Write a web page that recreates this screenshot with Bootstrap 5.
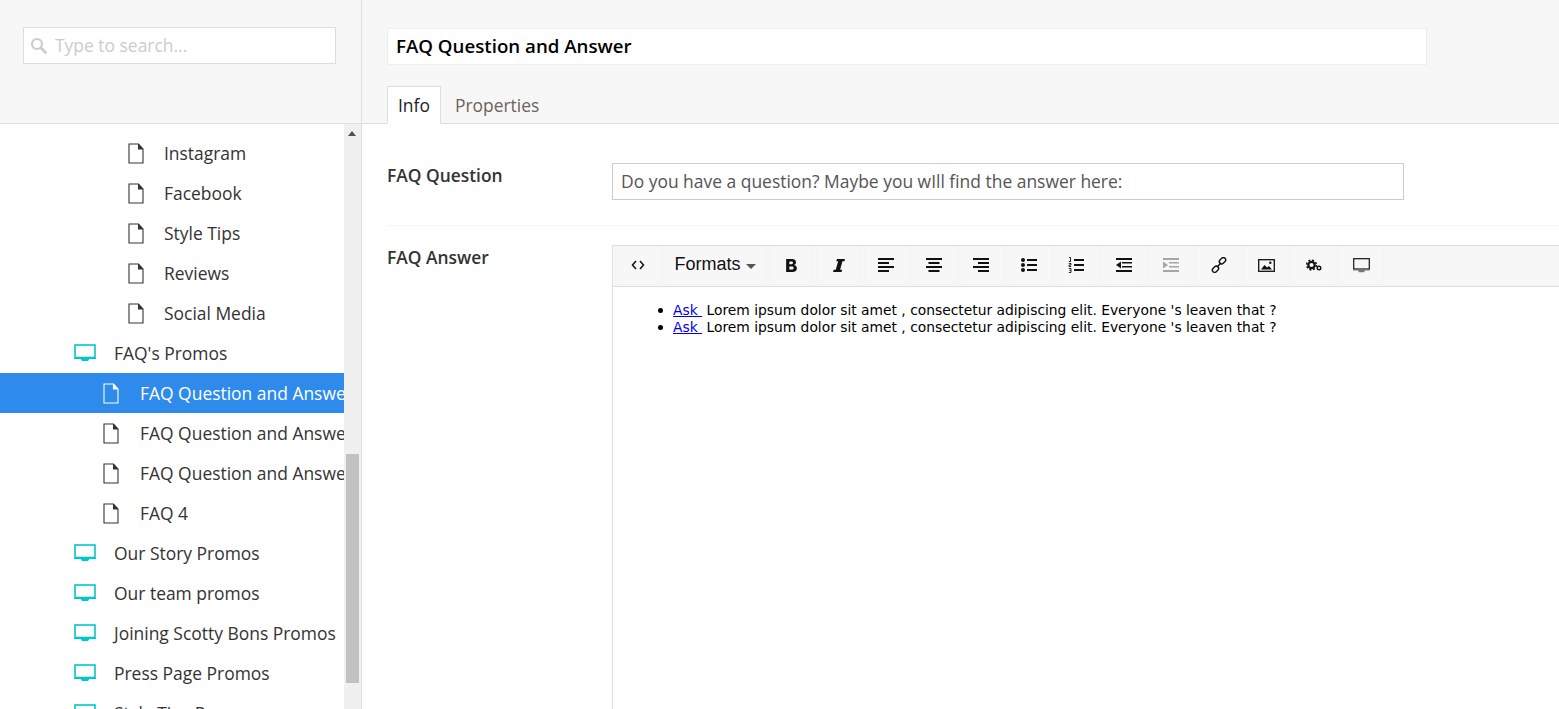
<!DOCTYPE html>
<html lang="en">
<head>
  <meta charset="UTF-8" />
  <meta name="viewport" content="width=device-width, initial-scale=1.0"/>
  <title>FAQ Question and Answer</title>
  <link href="https://cdn.jsdelivr.net/npm/bootstrap@5.3.3/dist/css/bootstrap.min.css" rel="stylesheet">
  <style>
    body {
      font-family: "Open Sans", sans-serif;
      font-size: 17.45px;
      color: #333;
      height: 709px;
      overflow: hidden;
    }
    .side-pane { width: 362px; border-right: 1px solid #ddd; height: 709px; }
    .head-area { height: 124px; background: #f7f7f7; border-bottom: 1px solid #ddd; }
    .side-head { padding: 27px 25px 0 23px; }
    .search-box { height: 37px; border: 1px solid #ddd; background: #fff; padding-left: 6px; gap: 8px; color: #ccc; }
    .search-box input { border: 0; outline: 0; padding: 0; width: 260px; font-size: 17.45px; color: #555; background: transparent; }
    .search-box input::placeholder { color: #ccc; opacity: 1; }

    .tree-wrap { height: 585px; overflow: hidden; }
    .tree-list { width: 344px; padding-top: 9px; overflow: hidden; white-space: nowrap; }
    .tree-row { height: 40px; color: #333; }
    .tree-row svg { flex: none; }
    .lvl-1 { padding-left: 74px; gap: 18px; }
    .lvl-2 { padding-left: 103px; gap: 21px; }
    .lvl-3 { padding-left: 128px; gap: 20px; }
    .tree-row.is-active { background: #2e8bec; color: #fff; }
    .scroll-track { width: 17px; background: #f0f0f0; position: relative; flex: none; }
    .scroll-up { position: absolute; left: 4px; top: 7px; border: 4px solid transparent; border-top: 0; border-bottom: 5px solid #505050; }
    .scroll-thumb { position: absolute; left: 2px; top: 330px; width: 13px; height: 229px; background: #c1c1c1; }

    .main-head { padding: 28px 0 0 25px; }
    .title-input.form-control {
      width: 1040px; height: 37px; border: 1px solid #eee; border-radius: 0; padding: 0 8px 2px;
      font-size: 18.7px; font-weight: 600; color: #000;
    }
    .page-tabs { margin-top: 21px; border-bottom: 0; gap: 0; }
    .page-tabs .nav-link {
      height: 38px; padding: 0 10px; line-height: 37px; font-size: 17.45px; color: #6b635c;
      border-radius: 0; margin: 0 3px 0 0; border: 1px solid transparent;
    }
    .page-tabs .nav-link.active { color: #222; background: #fff; border-color: #ddd #ddd #fff; }

    .form-part { padding: 39px 0 0 25px; }
    .field-label { width: 225px; flex: none; font-size: 17.4px; font-weight: 600; color: #333; line-height: 24px; }
    .q-input.form-control {
      width: 792px; height: 37px; border: 1px solid #ccc; border-radius: 0; padding: 0 8px 2px;
      font-size: 17.45px; color: #555; margin-top: 0;
    }
    .form-sep { border-top: 1px solid #f5f5f5; margin: 25px 0 19px; }

    .editor-box { width: 960px; height: 480px; border: 1px solid #ddd; border-right: 0; }
    .edit-bar { height: 41px; background: #f7f7f7; border-bottom: 1px solid #ddd; padding: 0 0 0 2px; gap: 2px; }
    .edit-btn.btn {
      width: 45.5px; height: 39px; padding: 0; border: 1px solid #f3f3f3; border-top: 0; border-radius: 0 0 4px 4px;
      background: #f7f7f7; color: #111; font-family: "Liberation Sans", sans-serif;
      display: flex; align-items: center; justify-content: center; flex: none;
    }
    .edit-btn.fmt-btn { width: 104px; font-size: 18px; gap: 5px; color: #111; padding-bottom: 2px; padding-left: 1px; }
    .caret-down { border: 5px solid transparent; border-bottom: 0; border-top: 5px solid #555; margin-top: 4px; }
    .edit-body { padding: 15px 0 0 60px; font-family: "DejaVu Sans", Verdana, sans-serif; font-size: 13.84px; line-height: 17px; color: #000; }
    .edit-body ul { padding-left: 0; margin: 0; list-style: none; }
    .edit-body li { position: relative; }
    .edit-body li::before { content: ""; position: absolute; left: -15px; top: 6px; width: 5px; height: 5px; border-radius: 50%; background: #000; }
    .edit-body a { color: #00e; }
  </style>
</head>
<body>
  <svg width="0" height="0" class="d-none">
    <symbol id="ic-doc" viewBox="0 0 16 21"><path d="M1 1h9.500L15 6v14H1zM10.500 1v5H15" fill="none" stroke="currentColor" stroke-width="1.100"/><path d="M10.500 1 15 6h-4.500z" fill="currentColor"/></symbol>
    <symbol id="ic-screen" viewBox="0 0 22 18"><rect x="1" y="1" width="20" height="12.500" fill="none" stroke="#00c8c8" stroke-width="1.600"/><path d="M0 14h22v1H0zM6.500 15h9l-1.500 2H8z" fill="#00c8c8"/></symbol>
  </svg>

  <div class="d-flex">
    <aside class="side-pane flex-shrink-0">
      <div class="head-area side-head">
        <div class="search-box d-flex align-items-center">
          <svg width="17" height="17" viewBox="0 0 17 17"><circle cx="7" cy="7" r="5" fill="none" stroke="#ccc" stroke-width="2.200"/><path d="M10.800 10.800 15.500 15.500" stroke="#ccc" stroke-width="2.800" stroke-linecap="round"/></svg>
          <input type="text" placeholder="Type to search...">
        </div>
      </div>
      <div class="tree-wrap d-flex">
        <div class="tree-list">
          <div class="tree-row lvl-3 d-flex align-items-center"><svg width="16" height="21"><use href="#ic-doc"/></svg><span>Instagram</span></div>
          <div class="tree-row lvl-3 d-flex align-items-center"><svg width="16" height="21"><use href="#ic-doc"/></svg><span>Facebook</span></div>
          <div class="tree-row lvl-3 d-flex align-items-center"><svg width="16" height="21"><use href="#ic-doc"/></svg><span>Style Tips</span></div>
          <div class="tree-row lvl-3 d-flex align-items-center"><svg width="16" height="21"><use href="#ic-doc"/></svg><span>Reviews</span></div>
          <div class="tree-row lvl-3 d-flex align-items-center"><svg width="16" height="21"><use href="#ic-doc"/></svg><span>Social Media</span></div>
          <div class="tree-row lvl-1 d-flex align-items-center"><svg width="22" height="18"><use href="#ic-screen"/></svg><span>FAQ's Promos</span></div>
          <div class="tree-row lvl-2 is-active d-flex align-items-center"><svg width="16" height="21"><use href="#ic-doc"/></svg><span>FAQ Question and Answer</span></div>
          <div class="tree-row lvl-2 d-flex align-items-center"><svg width="16" height="21"><use href="#ic-doc"/></svg><span>FAQ Question and Answer</span></div>
          <div class="tree-row lvl-2 d-flex align-items-center"><svg width="16" height="21"><use href="#ic-doc"/></svg><span>FAQ Question and Answer</span></div>
          <div class="tree-row lvl-2 d-flex align-items-center"><svg width="16" height="21"><use href="#ic-doc"/></svg><span>FAQ 4</span></div>
          <div class="tree-row lvl-1 d-flex align-items-center"><svg width="22" height="18"><use href="#ic-screen"/></svg><span>Our Story Promos</span></div>
          <div class="tree-row lvl-1 d-flex align-items-center"><svg width="22" height="18"><use href="#ic-screen"/></svg><span>Our team promos</span></div>
          <div class="tree-row lvl-1 d-flex align-items-center"><svg width="22" height="18"><use href="#ic-screen"/></svg><span>Joining Scotty Bons Promos</span></div>
          <div class="tree-row lvl-1 d-flex align-items-center"><svg width="22" height="18"><use href="#ic-screen"/></svg><span>Press Page Promos</span></div>
          <div class="tree-row lvl-1 d-flex align-items-center"><svg width="22" height="18"><use href="#ic-screen"/></svg><span>Style Tips Promos</span></div>
        </div>
        <div class="scroll-track">
          <span class="scroll-up"></span>
          <span class="scroll-thumb"></span>
        </div>
      </div>
    </aside>

    <main class="flex-grow-1 overflow-hidden">
      <div class="head-area main-head">
        <input class="form-control title-input" type="text" value="FAQ Question and Answer">
        <ul class="nav nav-tabs page-tabs">
          <li class="nav-item"><a class="nav-link active" href="#">Info</a></li>
          <li class="nav-item"><a class="nav-link" href="#">Properties</a></li>
        </ul>
      </div>

      <div class="form-part">
        <div class="d-flex">
          <div class="field-label">FAQ Question</div>
          <input class="form-control q-input" type="text" value="Do you have a question? Maybe you wIll find the answer here:">
        </div>
        <div class="form-sep"></div>
        <div class="d-flex">
          <div class="field-label">FAQ Answer</div>
          <div class="editor-box">
            <div class="edit-bar d-flex">
              <button class="btn edit-btn" type="button"><svg width="14" height="10" viewBox="0 0 14 10"><path d="M5 1 1.500 5 5 9M9 1l3.500 4L9 9" fill="none" stroke="#111" stroke-width="1.500"/></svg></button>
              <button class="btn edit-btn fmt-btn" type="button">Formats<span class="caret-down"></span></button>
              <button class="btn edit-btn" type="button"><svg width="13" height="15" viewBox="0 0 12 14"><path d="M1 1h5.500c2.500 0 3.700 1.200 3.700 3 0 1.300-.7 2.200-1.800 2.600 1.500.3 2.600 1.400 2.600 3.200C11 12 9.400 13 7 13H1zM4 3.200v2.600h2c1 0 1.400-.5 1.400-1.300S7 3.200 6 3.200zM4 8v2.800h2.400C7.500 10.800 8 10.200 8 9.400 8 8.500 7.500 8 6.400 8z" fill="#111"/></svg></button>
              <button class="btn edit-btn" type="button"><svg width="13" height="15" viewBox="0 0 12 14"><path d="M4.500 1H12l-.4 2H9.700L7.500 11h1.800l-.4 2H1l.4-2h2L5.700 3H4z" fill="#111"/></svg></button>
              <button class="btn edit-btn" type="button"><svg width="16" height="14" viewBox="0 0 16 14"><path d="M0 0h16v2H0zM0 4h11v2H0zM0 8h16v2H0zM0 12h11v2H0z" fill="#111"/></svg></button>
              <button class="btn edit-btn" type="button"><svg width="16" height="14" viewBox="0 0 16 14"><path d="M0 0h16v2H0zM2.500 4h11v2h-11zM0 8h16v2H0zM2.500 12h11v2h-11z" fill="#111"/></svg></button>
              <button class="btn edit-btn" type="button"><svg width="16" height="14" viewBox="0 0 16 14"><path d="M0 0h16v2H0zM5 4h11v2H5zM0 8h16v2H0zM5 12h11v2H5z" fill="#111"/></svg></button>
              <button class="btn edit-btn" type="button"><svg width="16" height="14" viewBox="0 0 16 14"><circle cx="2" cy="2" r="2" fill="#111"/><circle cx="2" cy="7" r="2" fill="#111"/><circle cx="2" cy="12" r="2" fill="#111"/><path d="M6 1h10v2H6zM6 6h10v2H6zM6 11h10v2H6z" fill="#111"/></svg></button>
              <button class="btn edit-btn" type="button"><svg width="16" height="16" viewBox="0 0 16 16"><path d="M6 2h10v2H6zM6 7h10v2H6zM6 12h10v2H6z" fill="#111"/><path d="M1 .5h1.500v3.500M.8 4.500H3M.8 6.500h2.200v1.500H1v1.500h2.200M.8 11.500H3v4H.8M1.500 13.500H3" fill="none" stroke="#111" stroke-width=".9"/></svg></button>
              <button class="btn edit-btn" type="button"><svg width="16" height="14" viewBox="0 0 16 14"><path d="M0 0h16v2H0zM6 4h10v1.500H6zM6 8h10v1.500H6zM0 12h16v2H0z" fill="#111"/><path d="M5 3.500v7L0 7z" fill="#111"/></svg></button>
              <button class="btn edit-btn" type="button"><svg width="16" height="14" viewBox="0 0 16 14" opacity=".35"><path d="M0 0h16v2H0zM6 4h10v1.500H6zM6 8h10v1.500H6zM0 12h16v2H0z" fill="#111"/><path d="M0 3.500v7L5 7z" fill="#111"/></svg></button>
              <button class="btn edit-btn" type="button"><svg width="16" height="16" viewBox="0 0 16 16"><g fill="none" stroke="#111" stroke-width="1.400"><rect x="8" y="1.500" width="7" height="4.600" rx="2.300" transform="rotate(-45 11.500 3.800)"/><rect x="1" y="9.900" width="7" height="4.600" rx="2.300" transform="rotate(-45 4.500 12.200)"/><path d="M5.800 10.200 10.200 5.800"/></g></svg></button>
              <button class="btn edit-btn" type="button"><svg width="17" height="13" viewBox="0 0 17 13"><rect x=".7" y=".7" width="15.600" height="11.600" fill="none" stroke="#111" stroke-width="1.300"/><path d="M3 10.500 6.500 6l2.500 2.500 2-1.500 3 3.500z" fill="#111"/><circle cx="12.300" cy="3.800" r="1.200" fill="#111"/></svg></button>
              <button class="btn edit-btn" type="button"><svg width="16" height="13" viewBox="0 0 16 13"><circle cx="5.500" cy="6" r="3.200" fill="none" stroke="#111" stroke-width="2.200"/><circle cx="5.500" cy="6" r="4.900" fill="none" stroke="#111" stroke-width="1.500" stroke-dasharray="2 1.850"/><circle cx="13" cy="9" r="1.800" fill="none" stroke="#111" stroke-width="1.400"/></svg></button>
              <button class="btn edit-btn" type="button"><svg width="17" height="15" viewBox="0 0 17 15"><rect x=".7" y=".7" width="15.600" height="10.300" fill="none" stroke="#111" stroke-width="1.200"/><path d="M0 11.500h17v1H0zM5 12.500h7l-1 1.800H6z" fill="#777"/></svg></button>
            </div>
            <div class="edit-body">
              <ul>
                <li><a href="#">Ask&nbsp;</a> Lorem ipsum dolor sit amet , consectetur adipiscing elit. Everyone 's leaven that ?</li>
                <li><a href="#">Ask&nbsp;</a> Lorem ipsum dolor sit amet , consectetur adipiscing elit. Everyone 's leaven that ?</li>
              </ul>
            </div>
          </div>
        </div>
      </div>
    </main>
  </div>

  <script src="https://cdn.jsdelivr.net/npm/bootstrap@5.3.3/dist/js/bootstrap.bundle.min.js"></script>
</body>
</html>
